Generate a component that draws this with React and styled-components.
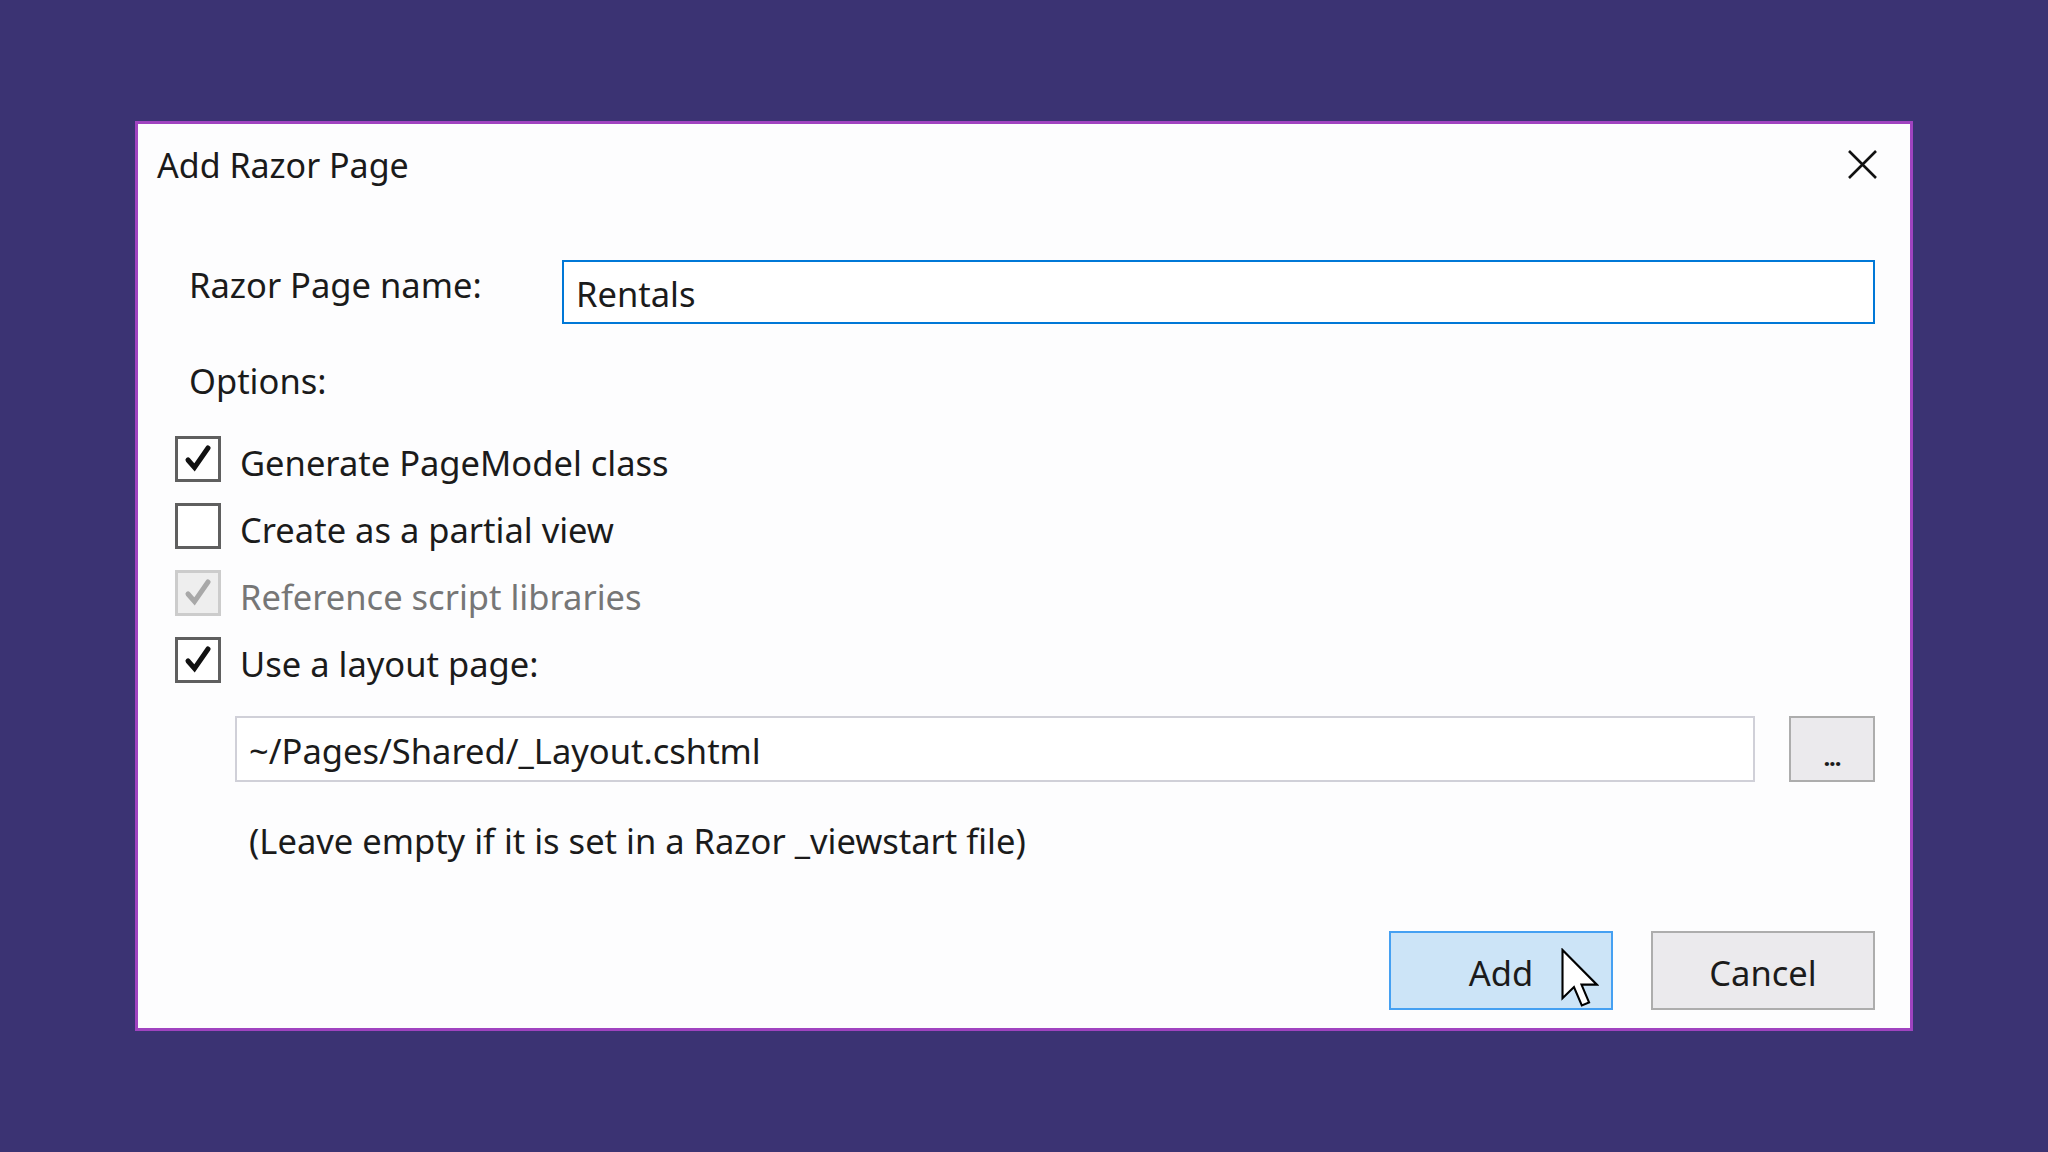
import React from "react";
import styled, { createGlobalStyle } from "styled-components";

const Global = createGlobalStyle`
  html, body { margin: 0; padding: 0; }
  body {
    background: #3b3373;
    font-family: "Noto Sans", "Open Sans", sans-serif;
    color: #1b1b1b;
  }
`;

const Page = styled.div`
  width: 100vw;
  height: 100vh;
  display: flex;
  align-items: center;
  justify-content: center;
`;

const Dialog = styled.div`
  box-sizing: border-box;
  width: 1778px;
  height: 910px;
  border: 3px solid #a043c0;
  background: #fdfdfe;
  display: flex;
  flex-direction: column;
`;

const Header = styled.div`
  height: 80px;
  display: flex;
  align-items: center;
  justify-content: space-between;
  padding: 0 32px 0 19px;
`;

const Title = styled.div`
  font-size: 34px;
  color: #1a1a1a;
  padding-top: 2px;
`;

const Close = styled.button`
  width: 31px;
  height: 31px;
  padding: 0;
  border: none;
  background: transparent;
  display: flex;
`;

const Body = styled.div`
  display: flex;
  flex-direction: column;
  padding-right: 35px;
  font-size: 34.5px;
`;

const NameRow = styled.div`
  margin-top: 56px;
  display: flex;
  align-items: flex-start;
  padding-left: 51px;
`;

const Label = styled.div`
  width: 373px;
  height: 50px;
  line-height: 50px;
`;

const TextBox = styled.div`
  box-sizing: border-box;
  flex: 1;
  height: ${(p) => p.$h}px;
  border: 2px solid ${(p) => (p.$focused ? "#0078d7" : "#d0d0d8")};
  background: #ffffff;
  display: flex;
  align-items: center;
  padding-left: 12px;
  padding-top: 3px;
`;

const OptionsLabel = styled.div`
  margin-top: 32px;
  padding-left: 51px;
  height: 50px;
  line-height: 50px;
`;

const CheckList = styled.div`
  margin-top: 19px;
  display: flex;
  flex-direction: column;
`;

const CheckRow = styled.div`
  height: 67px;
  display: flex;
  align-items: center;
  gap: 19px;
  padding-left: 37px;
  color: ${(p) => (p.$disabled ? "#767676" : "#1b1b1b")};
`;

const Box = styled.div`
  box-sizing: border-box;
  width: 46px;
  height: 46px;
  border: 3px solid ${(p) => (p.$disabled ? "#cccccc" : "#5f5f5f")};
  background: ${(p) => (p.$disabled ? "#eeeeee" : "#ffffff")};
  display: flex;
  align-items: center;
  justify-content: center;
`;

const CheckText = styled.span`
  padding-top: 8px;
`;

const LayoutRow = styled.div`
  margin-top: 23px;
  padding-left: 97px;
  display: flex;
  gap: 34px;
`;

const Browse = styled.button`
  box-sizing: border-box;
  width: 86px;
  height: 66px;
  border: 2px solid #adadad;
  background: #ebeaed;
  font-family: inherit;
  font-size: 24px;
  font-weight: 700;
  color: #1b1b1b;
  padding: 14px 0 0;
  letter-spacing: -1px;
`;

const Help = styled.div`
  margin-top: 34px;
  padding-left: 111px;
  height: 50px;
  line-height: 50px;
`;

const Footer = styled.div`
  margin-top: 65px;
  display: flex;
  justify-content: flex-end;
  gap: 38px;
`;

const Button = styled.button`
  position: relative;
  box-sizing: border-box;
  width: 224px;
  height: 79px;
  border: 2px solid ${(p) => (p.$primary ? "#45a0f2" : "#adadad")};
  background: ${(p) => (p.$primary ? "#cce4f7" : "#ebeaed")};
  font-family: inherit;
  font-size: 34.5px;
  color: #1b1b1b;
  padding: 4px 0 0;
`;

const Cursor = styled.svg`
  position: absolute;
  left: 170px;
  top: 15px;
  width: 38px;
  height: 60px;
`;

function Check({ disabled }) {
  return (
    <svg width="40" height="40" viewBox="0 0 40 40">
      <path
        d="M10 21 L16.5 28.5 L30 9"
        fill="none"
        stroke={disabled ? "#a8a8a8" : "#111111"}
        strokeWidth="5"
        strokeLinecap="round"
        strokeLinejoin="miter"
      />
    </svg>
  );
}

function CheckItem({ checked, disabled, children }) {
  return (
    <CheckRow $disabled={disabled}>
      <Box $disabled={disabled}>{checked && <Check disabled={disabled} />}</Box>
      <CheckText>{children}</CheckText>
    </CheckRow>
  );
}

export default function App() {
  return (
    <Page>
      <Global />
      <Dialog>
        <Header>
          <Title>Add Razor Page</Title>
          <Close aria-label="Close">
            <svg width="31" height="31" viewBox="0 0 31 31">
              <path d="M2 2 L29 29 M29 2 L2 29" stroke="#111" strokeWidth="2.6" />
            </svg>
          </Close>
        </Header>
        <Body>
          <NameRow>
            <Label>Razor Page name:</Label>
            <TextBox $h={64} $focused>Rentals</TextBox>
          </NameRow>
          <OptionsLabel>Options:</OptionsLabel>
          <CheckList>
            <CheckItem checked>Generate PageModel class</CheckItem>
            <CheckItem>Create as a partial view</CheckItem>
            <CheckItem checked disabled>Reference script libraries</CheckItem>
            <CheckItem checked>Use a layout page:</CheckItem>
          </CheckList>
          <LayoutRow>
            <TextBox $h={66}>~/Pages/Shared/_Layout.cshtml</TextBox>
            <Browse>...</Browse>
          </LayoutRow>
          <Help>(Leave empty if it is set in a Razor _viewstart file)</Help>
          <Footer>
            <Button $primary>
              Add
              <Cursor viewBox="0 0 12.6 19.6">
                <path
                  d="M0.5 0.5 L0.5 16.5 L4.3 12.8 L6.9 18.9 L9.3 17.9 L6.8 12 L11.9 12 Z"
                  fill="#ffffff"
                  stroke="#000000"
                  strokeWidth="0.7"
                  strokeLinejoin="miter"
                />
              </Cursor>
            </Button>
            <Button>Cancel</Button>
          </Footer>
        </Body>
      </Dialog>
    </Page>
  );
}
